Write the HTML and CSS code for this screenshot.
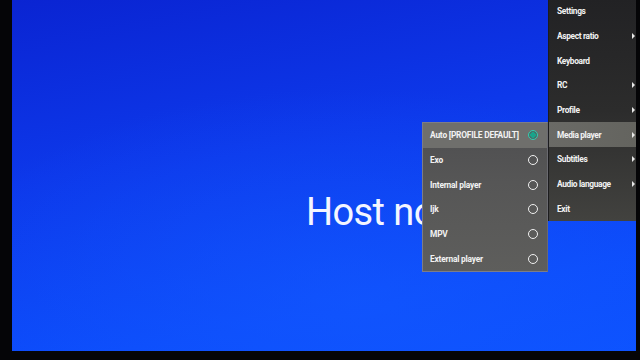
FILE: index.html
```html
<!DOCTYPE html>
<html>
<head>
<meta charset="utf-8">
<link rel="stylesheet" href="styles.css">
</head>
<body>
<div class="screen">
  <div class="message"><span class="msg-text">Host not found</span></div>

  <div class="menu">
    <div class="item"><span>Settings</span></div>
    <div class="item"><span>Aspect ratio</span><i class="arrow"></i></div>
    <div class="item"><span>Keyboard</span></div>
    <div class="item"><span>RC</span><i class="arrow"></i></div>
    <div class="item"><span>Profile</span><i class="arrow"></i></div>
    <div class="item active"><span>Media player</span><i class="arrow"></i></div>
    <div class="item"><span>Subtitles</span><i class="arrow"></i></div>
    <div class="item"><span>Audio language</span><i class="arrow"></i></div>
    <div class="item"><span>Exit</span></div>
  </div>

  <div class="submenu">
    <div class="opt active"><span>Auto [PROFILE DEFAULT]</span><i class="radio on"></i></div>
    <div class="opt"><span>Exo</span><i class="radio"></i></div>
    <div class="opt"><span>Internal player</span><i class="radio"></i></div>
    <div class="opt"><span>Ijk</span><i class="radio"></i></div>
    <div class="opt"><span>MPV</span><i class="radio"></i></div>
    <div class="opt"><span>External player</span><i class="radio"></i></div>
  </div>
</div>
</body>
</html>
```
FILE: styles.css
```css
html, body {
  margin: 0;
  padding: 0;
  background: #050507;
  width: 640px;
  height: 360px;
  overflow: hidden;
  font-family: Roboto, "Liberation Sans", sans-serif;
}
.screen {
  position: relative;
  margin: 0 4px 9px 12px;
  width: 624px;
  height: 351px;
  overflow: hidden;
  background:
    radial-gradient(ellipse 70% 60% at 55% 85%, rgba(20, 90, 255, 0.55), rgba(20, 90, 255, 0) 100%),
    linear-gradient(170deg, #0a24d2 0%, #0d38ea 40%, #0c4cfb 80%, #0c52ff 100%);
}
.message {
  margin: 193px 0 0 294px;
  width: 116px;
  overflow: hidden;
  font-size: 38px;
  line-height: 1;
  color: #f4f6ff;
  white-space: nowrap;
  letter-spacing: -0.6px;
}
.menu {
  position: absolute;
  top: -1px;
  right: 0;
  width: 87px;
  display: flex;
  flex-direction: column;
  background: linear-gradient(180deg, #222224 0%, #2c2c2c 50%, #42423f 100%);
  box-shadow: -1px 0 0 #1c1c1e;
}
.item, .opt {
  height: 24.7px;
  display: flex;
  align-items: center;
  justify-content: space-between;
  color: #f2f2f2;
  font-size: 8.4px;
  font-weight: 700;
  letter-spacing: -0.35px;
  white-space: nowrap;
}
.item {
  padding: 0 1px 0 8px;
}
.item.active {
  background: linear-gradient(90deg, #6a6a66, #64645f);
}
.arrow {
  width: 0;
  height: 0;
  border-top: 3px solid transparent;
  border-bottom: 3px solid transparent;
  border-left: 3px solid #e8e8e8;
}
.submenu {
  position: absolute;
  top: 122px;
  left: 410px;
  width: 124px;
  display: flex;
  flex-direction: column;
  background: linear-gradient(180deg, #4e4e50 0%, #565656 40%, #5e5e5c 100%);
  border: 1px solid #7d7d88;
  border-right: 1px solid #6a6a70;
}
.opt {
  padding: 0 9px 0 7px;
  letter-spacing: -0.2px;
}
.opt.active {
  background: #6f6f6c;
}
.radio {
  box-sizing: border-box;
  width: 10px;
  height: 10px;
  border-radius: 50%;
  border: 1.3px solid #f0f0f0;
}
.radio.on {
  border-color: #2fd0b0;
  background: radial-gradient(circle, #1aa38a 0 2.6px, #4a6a66 3px);
}
```
